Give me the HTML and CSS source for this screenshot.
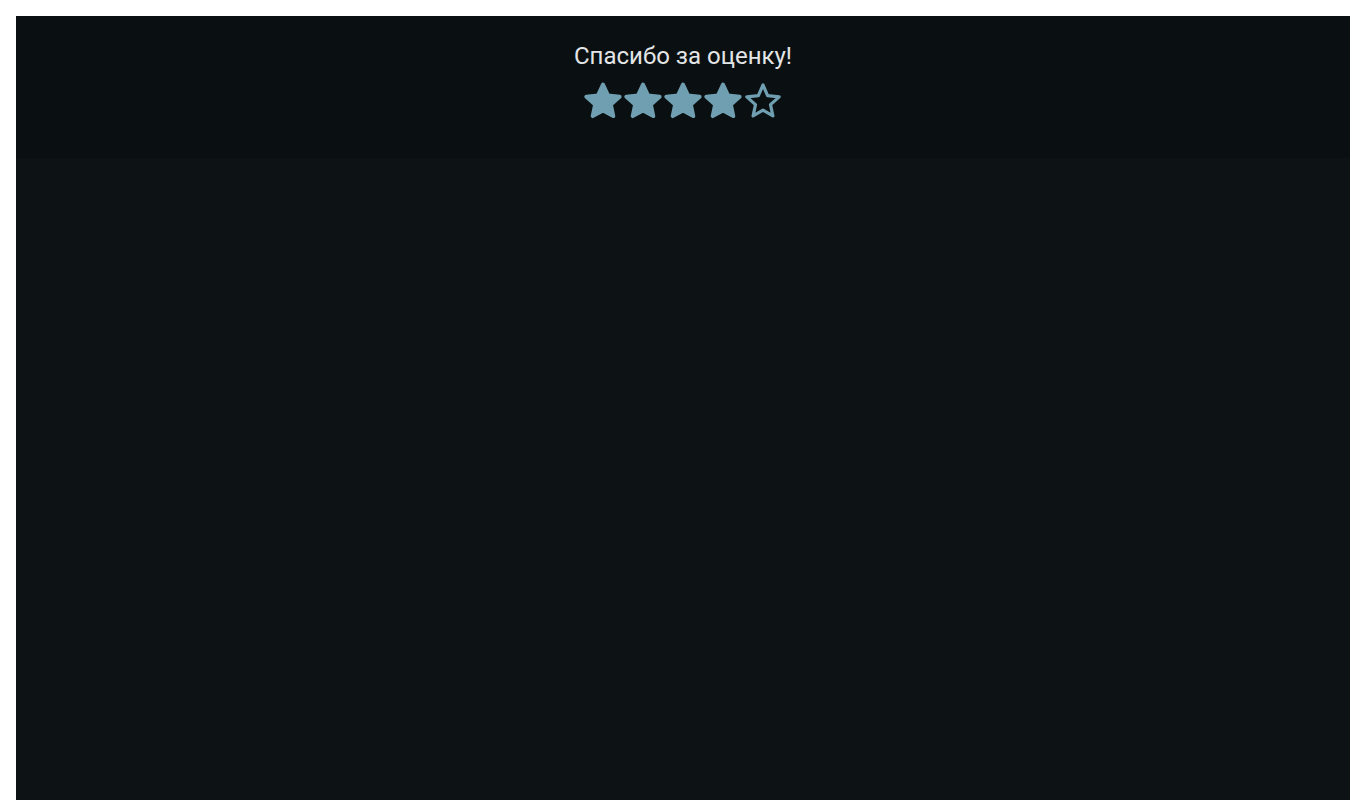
FILE: index.html
```html
<!DOCTYPE html>
<html lang="ru">
<head>
<meta charset="utf-8">
<title>Спасибо за оценку</title>
<link rel="stylesheet" href="styles.css">
</head>
<body>
<div class="app">
  <header class="rating">
    <h1 class="rating__title">Спасибо за оценку!</h1>
    <div class="rating__stars">
      <svg class="star star--filled" viewBox="0 0 40 40"><polygon points="20,2.6 25,13.4 36.6,14.7 27.9,22.6 30.3,34.1 20,28.4 9.7,34.1 12.1,22.6 3.4,14.7 15,13.4"/></svg>
      <svg class="star star--filled" viewBox="0 0 40 40"><polygon points="20,2.6 25,13.4 36.6,14.7 27.9,22.6 30.3,34.1 20,28.4 9.7,34.1 12.1,22.6 3.4,14.7 15,13.4"/></svg>
      <svg class="star star--filled" viewBox="0 0 40 40"><polygon points="20,2.6 25,13.4 36.6,14.7 27.9,22.6 30.3,34.1 20,28.4 9.7,34.1 12.1,22.6 3.4,14.7 15,13.4"/></svg>
      <svg class="star star--filled" viewBox="0 0 40 40"><polygon points="20,2.6 25,13.4 36.6,14.7 27.9,22.6 30.3,34.1 20,28.4 9.7,34.1 12.1,22.6 3.4,14.7 15,13.4"/></svg>
      <svg class="star star--empty" viewBox="0 0 40 40"><polygon points="20,3 24.6,13.7 36.2,14.9 27.5,22.6 29.9,33.9 20,28.2 10.1,33.9 12.5,22.6 3.8,14.9 15.4,13.7"/></svg>
    </div>
  </header>
  <main class="content"></main>
</div>
</body>
</html>
```
FILE: styles.css
```css
html, body {
  margin: 0;
  padding: 0;
  background: #ffffff;
}
body {
  padding: 16px 16px 0 16px;
  font-family: Roboto, "Noto Sans", sans-serif;
}
.app {
  display: flex;
  flex-direction: column;
  min-height: 784px;
  background: #0d1215;
}
.rating {
  height: 142px;
  box-sizing: border-box;
  padding-top: 26px;
  background: #0a0f12;
  display: flex;
  flex-direction: column;
  align-items: center;
}
.rating__title {
  margin: 0;
  font-size: 24px;
  font-weight: 400;
  line-height: 28px;
  color: #e3e5e6;
}
.rating__stars {
  display: flex;
  margin-top: 12px;
}
.star {
  width: 40px;
  height: 40px;
  display: block;
}
.star polygon {
  stroke: #6f9fb1;
  stroke-linejoin: round;
}
.star--filled polygon {
  fill: #6f9fb1;
  stroke-width: 4;
}
.star--empty polygon {
  fill: none;
  stroke-width: 3.2;
}
.content {
  flex: 1;
}
```
